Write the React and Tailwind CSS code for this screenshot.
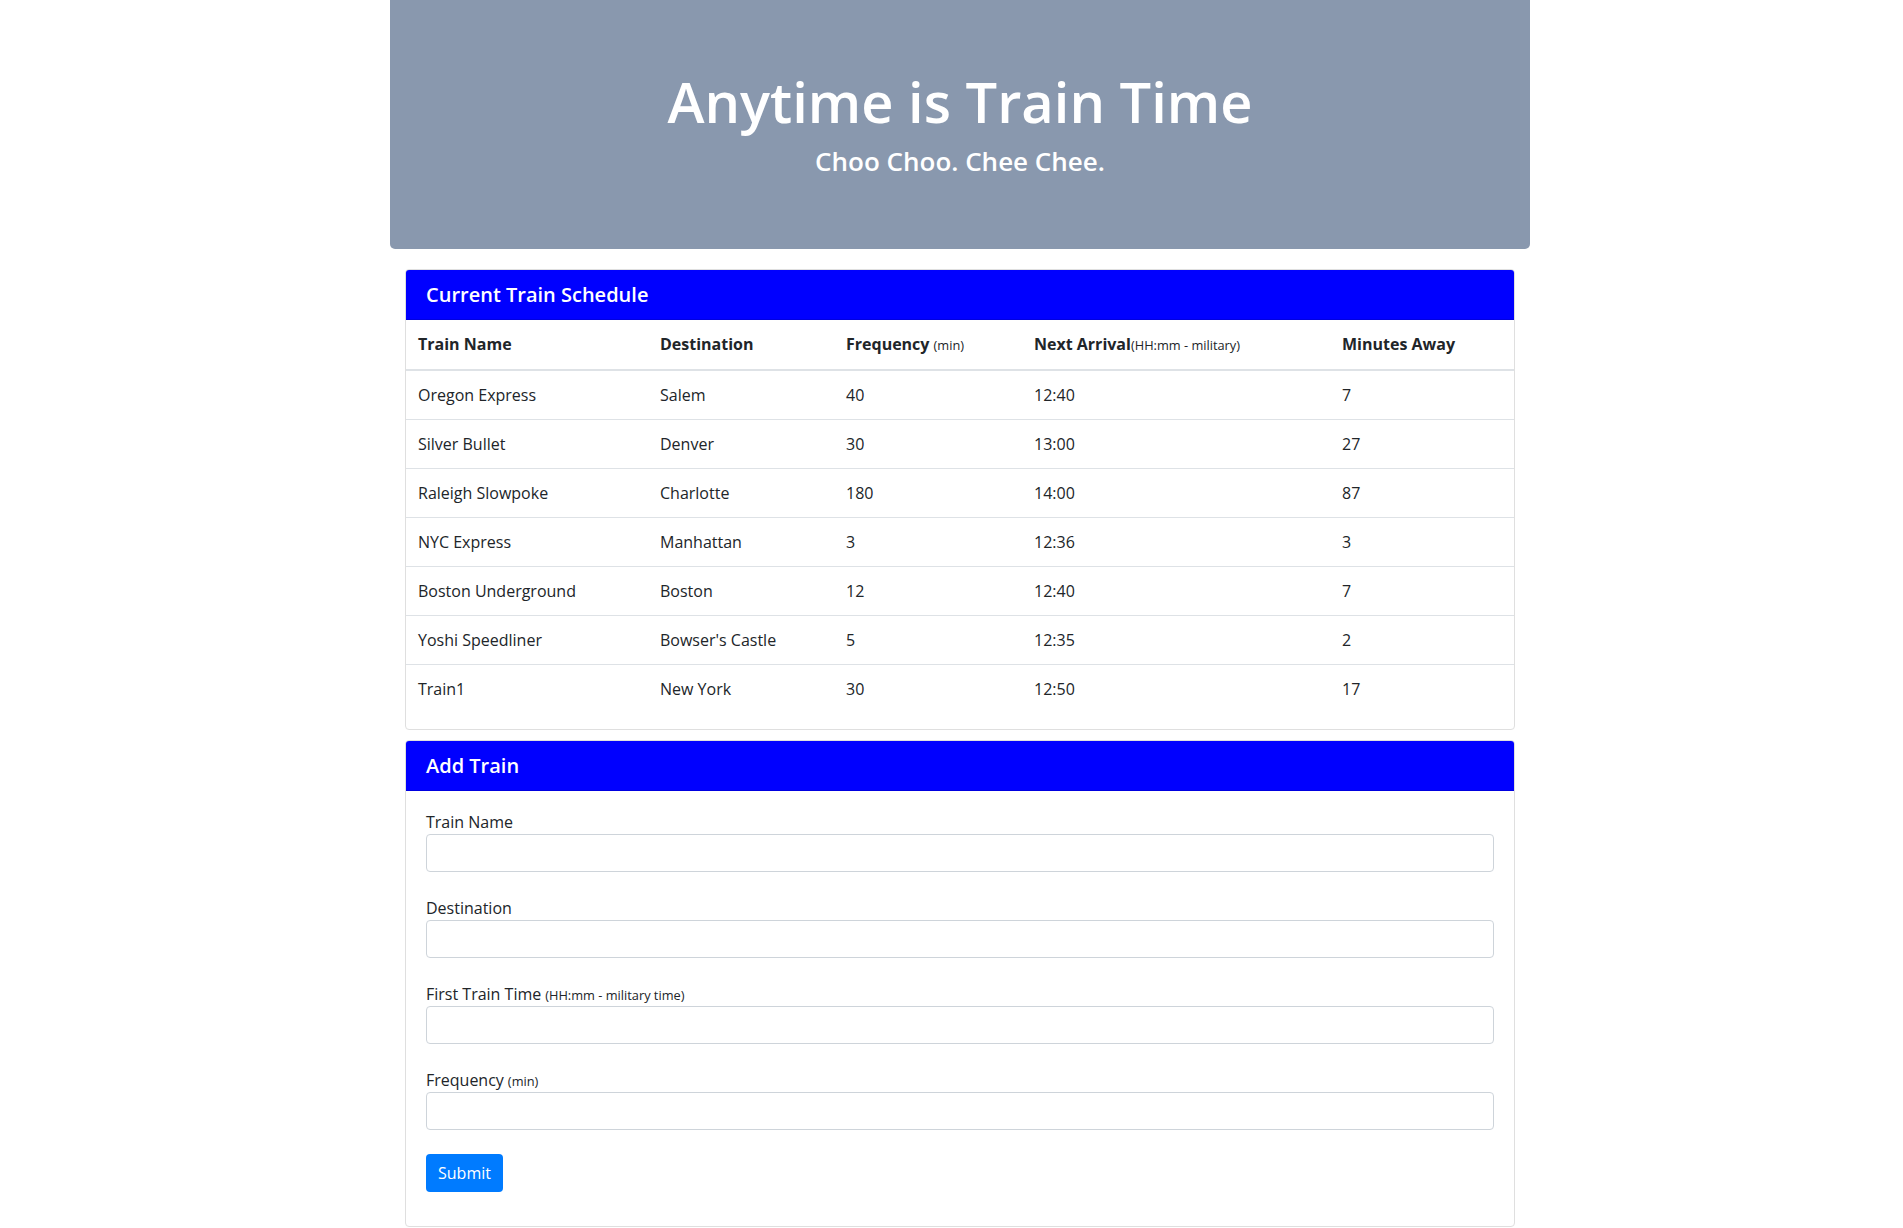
import React from 'react'

const trains = [
  { name: 'Oregon Express', dest: 'Salem', freq: 40, next: '12:40', away: 7 },
  { name: 'Silver Bullet', dest: 'Denver', freq: 30, next: '13:00', away: 27 },
  { name: 'Raleigh Slowpoke', dest: 'Charlotte', freq: 180, next: '14:00', away: 87 },
  { name: 'NYC Express', dest: 'Manhattan', freq: 3, next: '12:36', away: 3 },
  { name: 'Boston Underground', dest: 'Boston', freq: 12, next: '12:40', away: 7 },
  { name: 'Yoshi Speedliner', dest: "Bowser's Castle", freq: 5, next: '12:35', away: 2 },
  { name: 'Train1', dest: 'New York', freq: 30, next: '12:50', away: 17 },
]

function CardHeader({ title }) {
  return (
    <div className="h-[50px] flex items-center px-5 bg-[#0000ff] border-b border-[#0000df] rounded-t-[3px]">
      <h5 className="text-[20px] leading-6 font-semibold text-white">{title}</h5>
    </div>
  )
}

function Field({ label, hint }) {
  return (
    <div className="mb-6">
      <label className="block h-6 text-base leading-6 text-[#212529]">
        {label}
        {hint && <small className="text-[12.8px] leading-none ml-1">{hint}</small>}
      </label>
      <input
        type="text"
        className="block w-full h-[38px] px-3 border border-[#ced4da] rounded-[4px] bg-white outline-none"
      />
    </div>
  )
}

export default function App() {
  return (
    <div className="min-h-screen bg-white pl-[17px] font-['Open_Sans',sans-serif] text-[#212529]">
      <div className="w-[1140px] mx-auto">
        <div className="h-[249px] pt-[68px] bg-[#8998ae] rounded-b-[5px] text-center text-white">
          <h1 className="text-[56px] leading-[67px] font-semibold">Anytime is Train Time</h1>
          <h4 className="mt-[11px] text-[26px] leading-[31px] font-semibold">Choo Choo. Chee Chee.</h4>
        </div>

        <div className="mx-[15px] mt-5 border border-[#dfdfdf] rounded-[4px]">
          <CardHeader title="Current Train Schedule" />
          <table className="w-full border-collapse mb-4 text-base leading-6">
            <colgroup>
              <col className="w-[242px]" />
              <col className="w-[186px]" />
              <col className="w-[188px]" />
              <col className="w-[308px]" />
              <col className="w-[184px]" />
            </colgroup>
            <thead>
              <tr className="border-b-2 border-[#dee2e6]">
                <th className="px-3 pt-3 pb-[13px] text-left font-bold">Train Name</th>
                <th className="px-3 pt-3 pb-[13px] text-left font-bold">Destination</th>
                <th className="px-3 pt-3 pb-[13px] text-left font-bold">
                  Frequency <small className="text-[12.8px] leading-none font-normal">(min)</small>
                </th>
                <th className="px-3 pt-3 pb-[13px] text-left font-bold">
                  Next Arrival<small className="text-[12.8px] leading-none font-normal">(HH:mm - military)</small>
                </th>
                <th className="px-3 pt-3 pb-[13px] text-left font-bold">Minutes Away</th>
              </tr>
            </thead>
            <tbody>
              {trains.map((t, i) => (
                <tr key={i} className={i > 0 ? 'border-t border-[#dee2e6]' : ''}>
                  <td className="p-3">{t.name}</td>
                  <td className="p-3">{t.dest}</td>
                  <td className="p-3">{t.freq}</td>
                  <td className="p-3">{t.next}</td>
                  <td className="p-3">{t.away}</td>
                </tr>
              ))}
            </tbody>
          </table>
        </div>

        <div className="mx-[15px] mt-[10px] border border-[#dfdfdf] rounded-[4px]">
          <CardHeader title="Add Train" />
          <div className="px-5 pt-[19px] pb-[34px]">
            <Field label="Train Name" />
            <Field label="Destination" />
            <Field label="First Train Time" hint="(HH:mm - military time)" />
            <Field label="Frequency" hint="(min)" />
            <button className="h-[38px] px-3 bg-[#007bff] text-white text-base leading-6 rounded-[4px]">
              Submit
            </button>
          </div>
        </div>
      </div>
    </div>
  )
}
